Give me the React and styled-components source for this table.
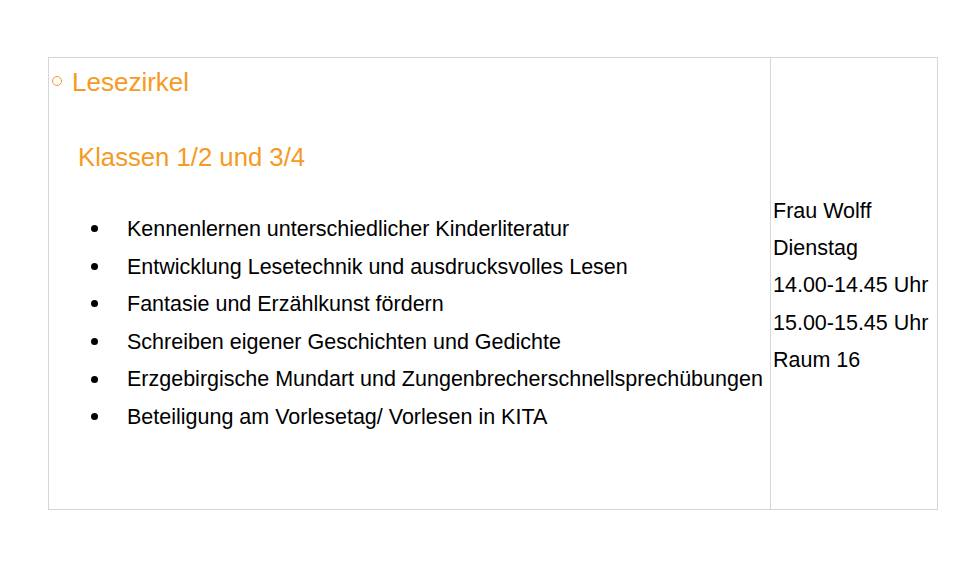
import React from 'react'
import styled, { createGlobalStyle } from 'styled-components'

const Global = createGlobalStyle`
    body {
        margin: 0;
        background: #ffffff;
        font-family: "Liberation Sans", Arial, sans-serif;
        color: #000000;
    }
`

const Page = styled.div`
    padding: 57px 0 0 48px;
`

const Table = styled.div`
    display: grid;
    grid-template-columns: 721px 167px;
    width: 890px;
    height: 453px;
    box-sizing: border-box;
    border: 1px solid #d6d6d6;
`

const MainCell = styled.div`
    padding: 9px 0 0 3px;
`

const SideCell = styled.div`
    border-left: 1px solid #d6d6d6;
    padding: 5px 0 0 2px;
    display: flex;
    flex-direction: column;
    justify-content: center;
    font-size: 21.5px;
    line-height: 37.3px;
`

const Title = styled.h2`
    display: flex;
    align-items: center;
    gap: 10px;
    margin: 0;
    font-size: 26px;
    font-weight: 400;
    color: #f59a23;
`

const Ring = styled.span`
    width: 8px;
    height: 8px;
    border: 1.3px solid #f59a23;
    border-radius: 50%;
    margin-top: -4px;
`

const Subtitle = styled.h3`
    margin: 45px 0 0 26px;
    font-size: 25.7px;
    font-weight: 400;
    color: #f59a23;
`

const List = styled.ul`
    list-style: none;
    margin: 39px 0 0 0;
    padding: 0;
    font-size: 21.5px;
    line-height: 37.6px;
`

const Item = styled.li`
    display: flex;
    align-items: center;
    padding-left: 39px;
    white-space: nowrap;

    &::before {
        content: '';
        width: 7px;
        height: 7px;
        border-radius: 50%;
        background: #000000;
        margin-right: 29px;
        margin-top: -2px;
        flex-shrink: 0;
    }
`

const topics = [
    'Kennenlernen unterschiedlicher Kinderliteratur',
    'Entwicklung Lesetechnik und ausdrucksvolles Lesen',
    'Fantasie und Erzählkunst fördern',
    'Schreiben eigener Geschichten und Gedichte',
    'Erzgebirgische Mundart und Zungenbrecherschnellsprechübungen',
    'Beteiligung am Vorlesetag/ Vorlesen in KITA',
]

const details = ['Frau Wolff', 'Dienstag', '14.00-14.45 Uhr', '15.00-15.45 Uhr', 'Raum 16']

export default function App() {
    return (
        <Page>
            <Global />
            <Table>
                <MainCell>
                    <Title>
                        <Ring />
                        Lesezirkel
                    </Title>
                    <Subtitle>Klassen 1/2 und 3/4</Subtitle>
                    <List>
                        {topics.map(t => (
                            <Item key={t}>{t}</Item>
                        ))}
                    </List>
                </MainCell>
                <SideCell>
                    {details.map(d => (
                        <div key={d}>{d}</div>
                    ))}
                </SideCell>
            </Table>
        </Page>
    )
}
